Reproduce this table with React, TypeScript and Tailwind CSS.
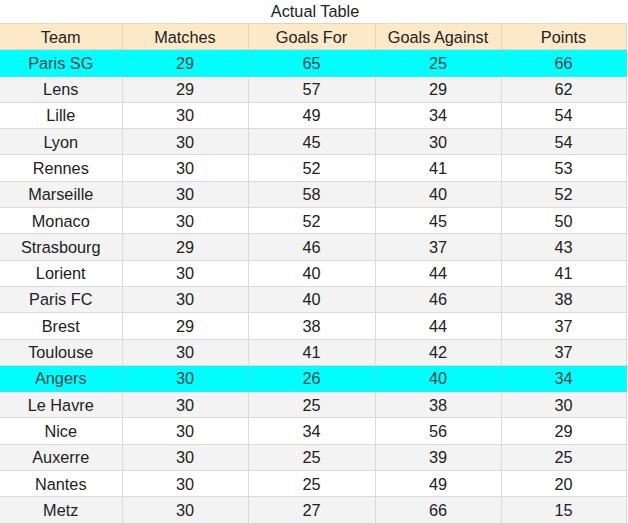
import React from 'react';

type Row = [string, number, number, number, number];

const rows: Row[] = [
  ['Paris SG', 29, 65, 25, 66],
  ['Lens', 29, 57, 29, 62],
  ['Lille', 30, 49, 34, 54],
  ['Lyon', 30, 45, 30, 54],
  ['Rennes', 30, 52, 41, 53],
  ['Marseille', 30, 58, 40, 52],
  ['Monaco', 30, 52, 45, 50],
  ['Strasbourg', 29, 46, 37, 43],
  ['Lorient', 30, 40, 44, 41],
  ['Paris FC', 30, 40, 46, 38],
  ['Brest', 29, 38, 44, 37],
  ['Toulouse', 30, 41, 42, 37],
  ['Angers', 30, 26, 40, 34],
  ['Le Havre', 30, 25, 38, 30],
  ['Nice', 30, 34, 56, 29],
  ['Auxerre', 30, 25, 39, 25],
  ['Nantes', 30, 25, 49, 20],
  ['Metz', 30, 27, 66, 15],
];

const highlighted = ['Paris SG', 'Angers'];
const headers = ['Team', 'Matches', 'Goals For', 'Goals Against', 'Points'];

export default function App() {
  return (
    <div className="w-[628px] h-[523px] bg-white overflow-hidden text-[16.3px] text-[#222] font-['Liberation_Sans',Arial,sans-serif]">
      <div className="h-[23px] flex items-center justify-center pl-[2px]">Actual Table</div>
      <table className="table-fixed border-collapse w-[626px]">
        <colgroup>
          <col className="w-[122px]" />
          <col className="w-[126px]" />
          <col className="w-[127px]" />
          <col className="w-[126px]" />
          <col className="w-[125px]" />
        </colgroup>
        <thead>
          <tr className="h-[26.3px] bg-[#fde9c7]">
            {headers.map((h) => (
              <th key={h} className="border border-[#e3d6bd] border-l-0 font-normal text-center leading-none p-0">
                {h}
              </th>
            ))}
          </tr>
        </thead>
        <tbody>
          {rows.map((r, i) => {
            const hi = highlighted.includes(r[0]);
            const bg = hi ? 'bg-[#00ffff] text-[#154545]' : i % 2 === 1 ? 'bg-[#f3f3f3]' : 'bg-white';
            return (
              <tr key={r[0]} className={`h-[26.3px] ${bg}`}>
                {r.map((c, j) => (
                  <td
                    key={j}
                    className={`border border-l-0 text-center leading-none p-0 ${hi ? 'border-[#3ee6e6]' : 'border-[#dadada]'}`}
                  >
                    {c}
                  </td>
                ))}
              </tr>
            );
          })}
        </tbody>
      </table>
    </div>
  );
}
